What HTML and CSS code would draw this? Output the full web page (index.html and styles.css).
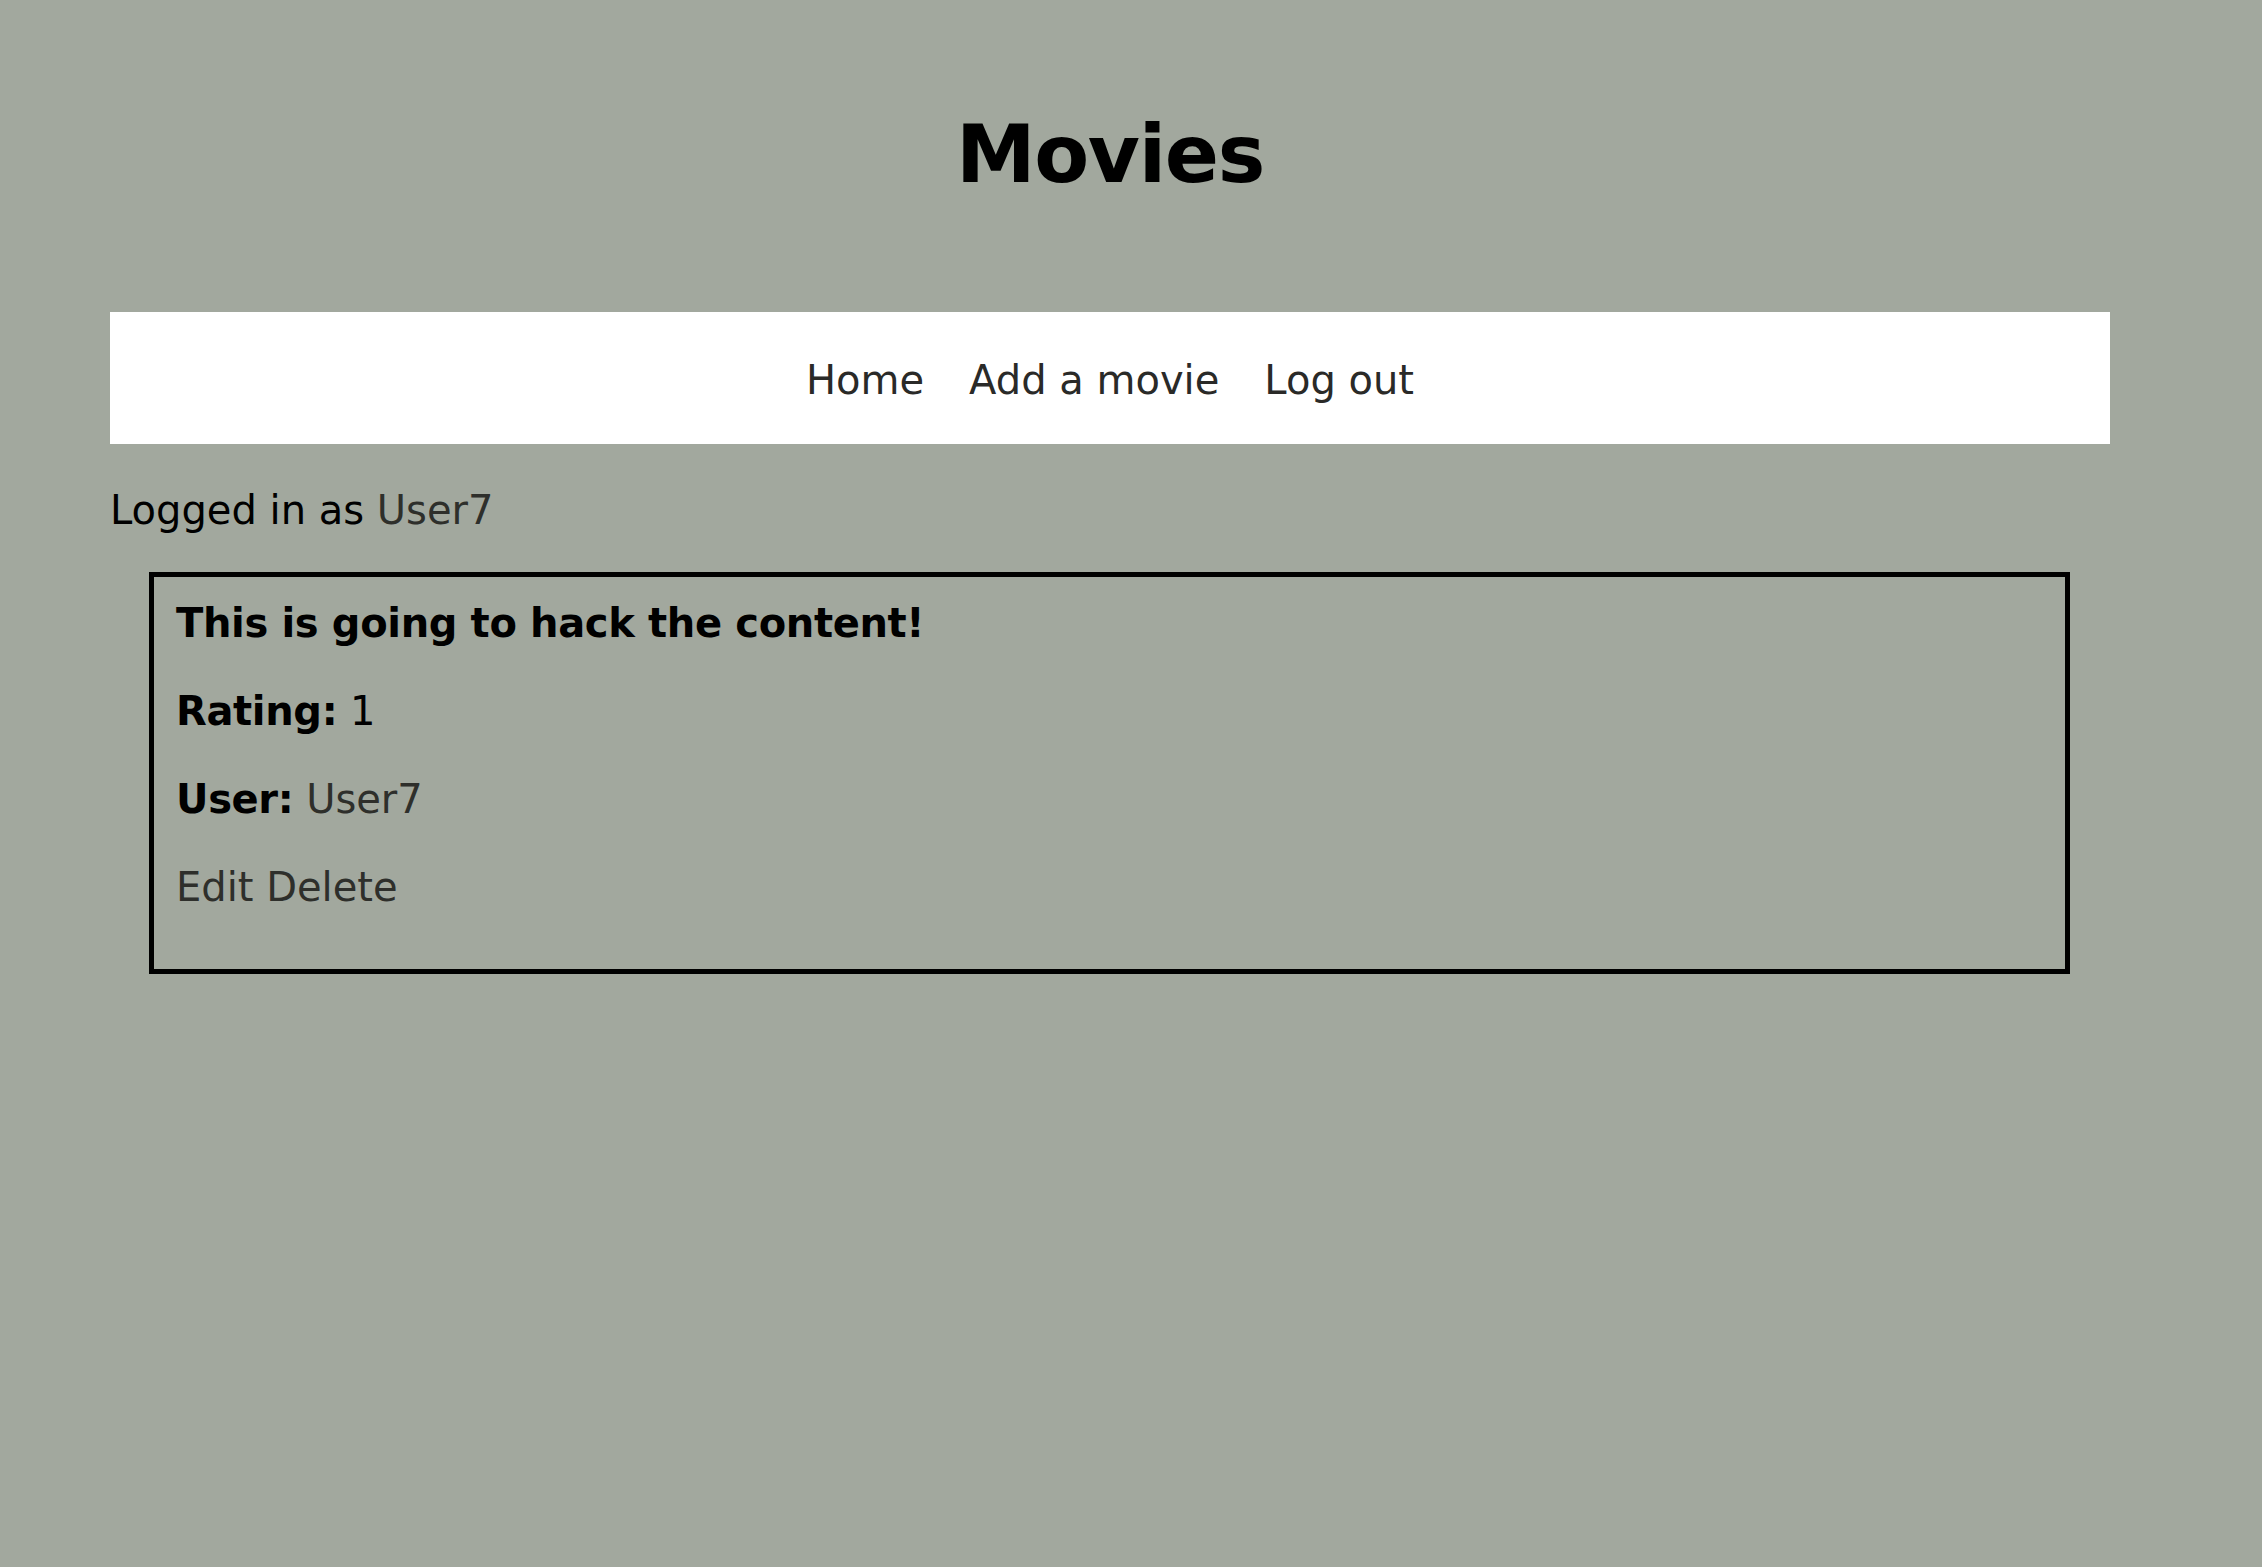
FILE: index.html
```html
<!DOCTYPE html>
<html lang="en">
<head>
<meta charset="utf-8">
<title>Movies</title>
<link rel="stylesheet" href="styles.css">
</head>
<body>
<div class="page">
  <header class="header">
    <h1 class="title">Movies</h1>
  </header>
  <nav class="nav">
    <a class="nav-link" href="#">Home</a>
    <a class="nav-link" href="#">Add a movie</a>
    <a class="nav-link" href="#">Log out</a>
  </nav>
  <p class="logged">Logged in as <a class="link" href="#">User7</a></p>
  <div class="card">
    <p class="card-line"><strong class="label">This is going to hack the content!</strong></p>
    <p class="card-line"><strong class="label">Rating:</strong> 1</p>
    <p class="card-line"><strong class="label">User:</strong> <a class="link" href="#">User7</a></p>
    <p class="card-line"><a class="link" href="#">Edit</a> <a class="link" href="#">Delete</a></p>
  </div>
</div>
</body>
</html>
```
FILE: styles.css
```css
html, body {
  margin: 0;
  padding: 0;
}
body {
  background: #a2a89e;
  color: #000;
  font-family: "DejaVu Sans", Verdana, sans-serif;
  font-size: 40px;
  line-height: 48px;
}
.page {
  margin: 0 152px 0 110px;
}
.header {
  padding-top: 107px;
}
.title {
  margin: 0;
  font-size: 80px;
  line-height: 96px;
  font-weight: bold;
  letter-spacing: -1.3px;
  text-align: center;
}
.nav {
  margin-top: 109px;
  height: 132px;
  box-sizing: border-box;
  padding-top: 4px;
  background: #fff;
  display: flex;
  justify-content: center;
  align-items: center;
  gap: 45px;
}
.nav-link {
  color: #2a2a28;
  text-decoration: none;
}
.link {
  color: #2e2f2b;
  text-decoration: none;
}
.label {
  letter-spacing: -0.35px;
}
.logged {
  margin: 42px 0 0;
}
.card {
  margin: 38px 40px 0 39px;
  border: 5px solid #000;
  padding: 22px 22px 18px;
}
.card-line {
  margin: 0 0 40px;
}
```
